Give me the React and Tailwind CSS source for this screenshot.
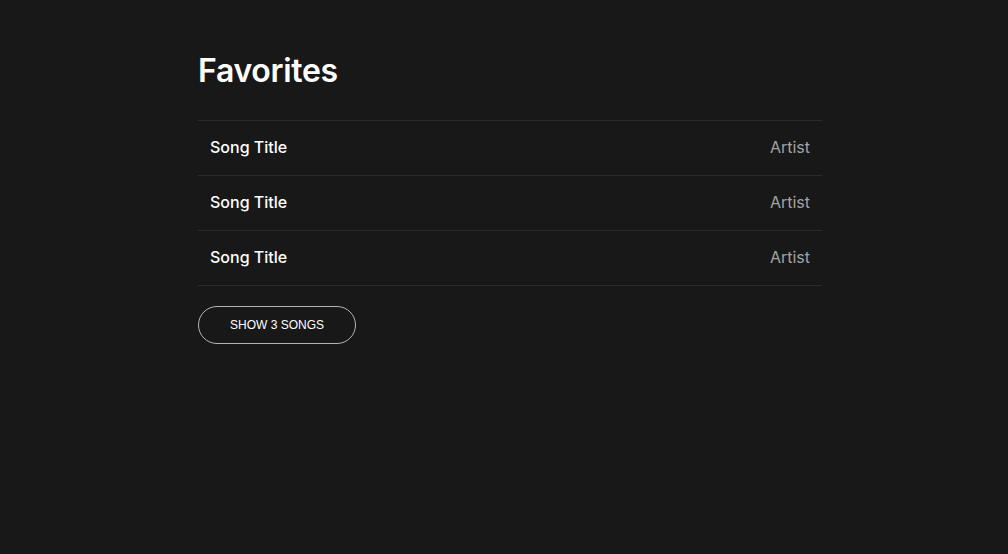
export default function App() {
  const songs = [
    { title: 'Song Title', artist: 'Artist' },
    { title: 'Song Title', artist: 'Artist' },
    { title: 'Song Title', artist: 'Artist' },
  ]

  return (
    <div className="min-h-[554px] w-full bg-[#181818] font-['Inter',sans-serif]">
      <div className="ml-[198px] w-[624px] pt-[52px]">
        <h1 className="h-[38px] text-[32px] leading-[38px] font-semibold text-white tracking-[-0.3px]">Favorites</h1>

        <ul className="mt-[30px] border-t border-[#2a2a2a]">
          {songs.map((s, i) => (
            <li key={i} className="flex h-[55px] items-center justify-between border-b border-[#2a2a2a] px-3 pb-[2px]">
              <span className="text-[16px] font-medium text-white">{s.title}</span>
              <span className="text-[16px] text-[#a3a3a3]">{s.artist}</span>
            </li>
          ))}
        </ul>

        <button className="mt-5 flex h-[38px] w-[158px] items-center justify-center rounded-full border border-[#b5b5b5] font-['Liberation_Sans',sans-serif] text-[12px] uppercase text-white">
          Show 3 songs
        </button>
      </div>
    </div>
  )
}
